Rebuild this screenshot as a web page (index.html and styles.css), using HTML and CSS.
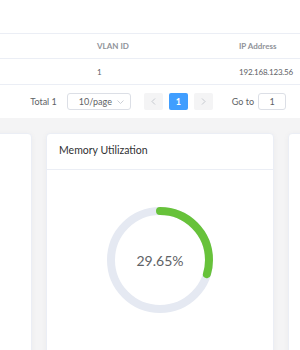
FILE: index.html
```html
<!DOCTYPE html>
<html lang="en">
<head>
  <meta charset="UTF-8" />
  <title>Device Status</title>
  <link rel="stylesheet" href="styles.css">
</head>
<body>
  <div class="table-panel">
    <div class="toolbar"></div>
    <table class="device-table">
      <thead>
        <tr>
          <th class="col-name"></th>
          <th class="col-vlan">VLAN ID</th>
          <th class="col-ip">IP Address</th>
        </tr>
      </thead>
      <tbody>
        <tr>
          <td></td>
          <td>1</td>
          <td>192.168.123.56</td>
        </tr>
      </tbody>
    </table>

    <div class="pagination">
      <span class="total">Total 1</span>
      <div class="size-select">
        <span>10/page</span>
        <svg class="caret" width="7" height="4" viewBox="0 0 7 4"><path d="M0.5 0.5 L3.5 3.5 L6.5 0.5" fill="none" stroke="#c0c4cc" stroke-width="0.8"/></svg>
      </div>
      <div class="pager">
        <button class="btn-nav" disabled>
          <svg width="5" height="7" viewBox="0 0 5 7"><path d="M4 0.5 L1 3.5 L4 6.5" fill="none" stroke="#c0c4cc" stroke-width="0.9"/></svg>
        </button>
        <button class="btn-page active">1</button>
        <button class="btn-nav" disabled>
          <svg width="5" height="7" viewBox="0 0 5 7"><path d="M1 0.5 L4 3.5 L1 6.5" fill="none" stroke="#c0c4cc" stroke-width="0.9"/></svg>
        </button>
      </div>
      <span class="goto">Go to</span>
      <div class="goto-input">1</div>
    </div>
  </div>

  <div class="cards">
    <div class="card"></div>
    <div class="card">
      <div class="card-header">Memory Utilization</div>
      <div class="card-body">
        <div class="progress">
          <svg width="106" height="106" viewBox="0 0 106 106">
            <circle cx="53" cy="53" r="49" fill="none" stroke="#e5e9f2" stroke-width="8"/>
            <circle cx="53" cy="53" r="49" fill="none" stroke="#67c23a" stroke-width="8"
              stroke-linecap="round" stroke-dasharray="91.29 307.88"
              transform="rotate(-90 53 53)"/>
          </svg>
          <div class="progress-text">29.65%</div>
        </div>
      </div>
    </div>
    <div class="card"></div>
  </div>
</body>
</html>
```

FILE: styles.css
```css
* {
  box-sizing: border-box;
}

body {
  margin: 0;
  font-family: 'Lato', 'Open Sans', sans-serif;
  background-color: #f4f4f5;
  color: #606266;
  overflow: hidden;
  height: 350px;
}

.table-panel {
  background-color: #fff;
}

.toolbar {
  height: 33px;
}

.device-table {
  width: 100%;
  border-collapse: collapse;
  table-layout: fixed;
  font-size: 8px;
  letter-spacing: -0.2px;
}

.device-table th,
.device-table td {
  text-align: left;
  padding: 0 0 0 9px;
  border-top: 1px solid #ebeef5;
  white-space: nowrap;
  overflow: hidden;
}

.device-table th {
  height: 25px;
  color: #909399;
  font-weight: bold;
  letter-spacing: 0;
}

.device-table td {
  height: 26px;
  border-bottom: 1px solid #ebeef5;
}

.col-name {
  width: 88px;
}

.col-vlan {
  width: 142px;
}

.pagination {
  height: 33px;
  display: flex;
  align-items: center;
  justify-content: flex-end;
  padding-right: 14px;
  font-size: 9px;
  color: #606266;
}

.total {
  margin-right: 10px;
}

.size-select {
  width: 64px;
  height: 17px;
  border: 1px solid #dcdfe6;
  border-radius: 3px;
  display: flex;
  align-items: center;
  justify-content: space-between;
  padding: 0 6px 0 11px;
  margin-right: 13px;
}

.pager {
  display: flex;
  gap: 6px;
  margin-right: 19px;
}

.pager button {
  width: 19px;
  height: 17px;
  border: none;
  border-radius: 2px;
  padding: 0;
  display: flex;
  align-items: center;
  justify-content: center;
  font-family: inherit;
  font-size: 9px;
  font-weight: bold;
}

.btn-nav {
  background-color: #f4f4f5;
}

.btn-page.active {
  background-color: #409eff;
  color: #fff;
}

.goto {
  margin-right: 4px;
}

.goto-input {
  width: 28px;
  height: 17px;
  border: 1px solid #dcdfe6;
  border-radius: 3px;
  display: flex;
  align-items: center;
  justify-content: center;
}

.cards {
  display: flex;
  gap: 14px;
  margin-left: -196px;
  padding-top: 15px;
}

.card {
  flex: 0 0 228px;
  height: 240px;
  background-color: #fff;
  border: 1px solid #ebeef5;
  border-radius: 4px;
  box-shadow: 0 1px 6px rgba(0, 0, 0, 0.04);
}

.card-header {
  height: 36px;
  padding: 0 0 3px 12px;
  display: flex;
  align-items: center;
  border-bottom: 1px solid #ebeef5;
  font-size: 10.5px;
  color: #303133;
}

.card-body {
  display: flex;
  justify-content: center;
  padding-top: 37px;
}

.progress {
  position: relative;
  width: 106px;
  height: 106px;
}

.progress svg {
  display: block;
}

.progress-text {
  position: absolute;
  top: 0;
  left: 0;
  width: 100%;
  height: 100%;
  display: flex;
  align-items: center;
  justify-content: center;
  font-size: 14px;
  color: #606266;
}
```
